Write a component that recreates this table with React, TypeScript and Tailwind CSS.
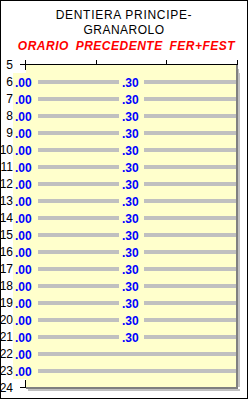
const hours = Array.from({ length: 18 }, (_, i) => i + 6)

function Label({ children }: { children: React.ReactNode }) {
  return (
    <span className="flex w-[12px] shrink-0 justify-end whitespace-nowrap text-[12px] leading-none text-black">
      {children}
    </span>
  )
}

function HourRow({ h }: { h: number }) {
  const half = h <= 21
  return (
    <div className="flex h-[17px] items-center">
      <Label>{h}</Label>
      <div className="flex h-full w-[225px] items-center border-r-2 border-[#808080] bg-[#ffffcc] shadow-[2px_0_0_#c0c0c0]">
        <span className="w-[25px] pl-[2px] pt-[2px] text-[12px] font-bold leading-none text-[#0000ff]">.00</span>
        {half ? (
          <>
            <div className="h-[4px] w-[81px] bg-[#c0c0c0]" />
            <span className="w-[25px] pl-[3px] pt-[2px] text-[12px] font-bold leading-none text-[#0000ff]">.30</span>
            <div className="h-[4px] flex-1 bg-[#c0c0c0]" />
          </>
        ) : (
          <div className="h-[4px] flex-1 bg-[#c0c0c0]" />
        )}
      </div>
    </div>
  )
}

export default function App() {
  return (
    <div className="h-[399px] w-[248px] overflow-hidden border border-black bg-white font-['Liberation_Sans',Arial,sans-serif]">
      <header className="h-[55px] pt-[7px] text-center text-[12px]">
        <p className="leading-[15px] tracking-[0.7px] text-black">DENTIERA PRINCIPE-</p>
        <p className="leading-[15px] tracking-[0.5px] text-black">GRANAROLO</p>
        <p className="mt-[1px] pl-[5px] font-bold italic leading-[15px] tracking-[0.5px] text-[#ff0000] [word-spacing:3px]">
          ORARIO PRECEDENTE FER+FEST
        </p>
      </header>

      {/* top axis: 5 */}
      <div className="flex h-[17px] items-center">
        <Label>5</Label>
        <div className="flex h-full flex-col">
          <div className="ml-[12px] flex h-[8px] w-[213px] items-end justify-between">
            <div className="h-[4px] w-px bg-black" />
            <div className="h-[4px] w-px bg-black" />
            <div className="h-[4px] w-px bg-black" />
            <div className="h-[4px] w-px bg-black" />
          </div>
          <div className="ml-[7px] h-px w-[218px] bg-black" />
          <div className="ml-[12px] flex h-[8px]">
            <div className="h-[5px] w-px bg-black" />
            <div className="h-full w-[212px] border-r-2 border-[#808080] bg-[#ffffcc] shadow-[2px_3px_0_-1px_#c0c0c0]" />
          </div>
        </div>
      </div>

      {hours.map((h) => (
        <HourRow key={h} h={h} />
      ))}

      {/* bottom axis: 24 */}
      <div className="flex h-[17px] items-center">
        <Label>24</Label>
        <div className="flex h-full flex-col">
          <div className="ml-[12px] flex h-[8px]">
            <div className="mt-px h-[7px] w-px self-end bg-black" />
            <div className="h-full w-[212px] border-r-2 border-[#808080] bg-[#ffffcc] shadow-[2px_0_0_#c0c0c0]" />
          </div>
          <div className="ml-[7px] flex">
            <div className="h-px w-[6px] bg-black" />
            <div className="h-[2px] w-[212px] bg-[#808080] shadow-[2px_2px_0_#c0c0c0]" />
          </div>
        </div>
      </div>
    </div>
  )
}
